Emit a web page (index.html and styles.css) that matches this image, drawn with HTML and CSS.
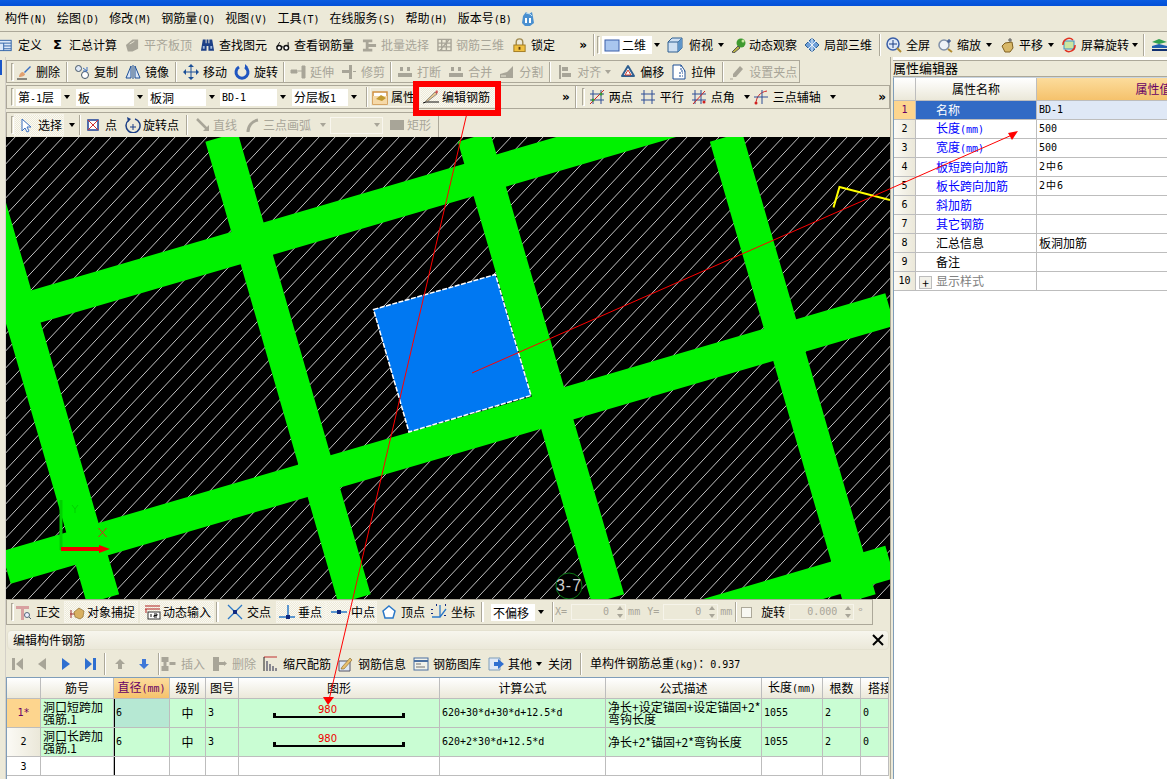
FILE: index.html
```html
<!DOCTYPE html>
<html lang="zh-CN">
<head>
<meta charset="utf-8">
<title>编辑构件钢筋</title>
<link rel="stylesheet" href="styles.css">
</head>
<body>
<div class="titlebar"></div>
<nav class="menubar">
  <span class="m">构件<span class="latin">(N)</span></span>
  <span class="m">绘图<span class="latin">(D)</span></span>
  <span class="m">修改<span class="latin">(M)</span></span>
  <span class="m">钢筋量<span class="latin">(Q)</span></span>
  <span class="m">视图<span class="latin">(V)</span></span>
  <span class="m">工具<span class="latin">(T)</span></span>
  <span class="m">在线服务<span class="latin">(S)</span></span>
  <span class="m">帮助<span class="latin">(H)</span></span>
  <span class="m">版本号<span class="latin">(B)</span></span>
  <svg class="ic ver" viewBox="0 0 16 16"><path d="M3 5l3-4 3 2 3-2 1 5 1 6-4 3H5L2 12z" fill="#4a90d0"/><path d="M5 7h2v5H5zM9 7h2v5H9z" fill="#fff"/><path d="M6 2l4 1 2 2" stroke="#bfe0f5" fill="none"/></svg>
</nav>
<div class="topbar">
  <div class="tgroup tg-main">
    <span class="t"><svg class="ic" viewBox="0 0 16 16"><rect x="0" y="3" width="13" height="11" fill="#dce8f8" stroke="#2f62a8"/><path d="M0 6h13M5 6v8M5 9h8M5 12h8" stroke="#2f62a8"/></svg>定义</span>
    <span class="t"><span class="ic sigma">Σ</span>汇总计算</span>
    <span class="t off"><svg class="ic" viewBox="0 0 16 16"><path d="M1 8l7-6h6v10l-6 3H3z" fill="#a8a598"/><path d="M5 7l5-3" stroke="#ece9d8"/></svg>平齐板顶</span>
    <span class="t"><svg class="ic" viewBox="0 0 16 16"><path d="M3 2h3v4h1V2h2v4h1V2h3l2 12h-6V9H7v5H1z" fill="#1c3f86"/><path d="M3 9h2v3H3zM11 9h2v3h-2z" fill="#9db7e0"/></svg>查找图元</span>
    <span class="t"><svg class="ic" viewBox="0 0 16 16"><circle cx="4.500" cy="11" r="2.500" fill="#fff" stroke="#111" stroke-width="1.500"/><circle cx="12" cy="11" r="2.500" fill="#fff" stroke="#111" stroke-width="1.500"/><path d="M2 10l3-5M14 10V5M7 10h2" stroke="#111" fill="none"/></svg>查看钢筋量</span>
    <span class="t off"><svg class="ic" viewBox="0 0 16 16"><path d="M1 2h10v3H7v2h8v3H7v2h4v3H1V12h3V5H1z" fill="#a8a598"/></svg>批量选择</span>
    <span class="t off"><svg class="ic" viewBox="0 0 16 16"><path d="M1 2h14v12H1zM1 6h14M1 10h14M5 2v12M10 2v12M3 14L13 2" stroke="#a8a598" stroke-width="1.500" fill="none"/></svg>钢筋三维</span>
    <span class="t"><svg class="ic" viewBox="0 0 16 16"><path d="M4.500 8V5a3.500 3.500 0 017 0v3" fill="none" stroke="#a08a50" stroke-width="1.500"/><rect x="2" y="8" width="12" height="7" fill="#f0c040" stroke="#a07a20"/><rect x="7" y="10" width="2" height="3" fill="#604010"/></svg>锁定</span>
  </div>
  <span class="more">»</span>
  <span class="sep"></span><span class="grip"></span>
  <div class="combo c-2d"><svg class="ic" viewBox="0 0 16 16"><rect x="1" y="3" width="14" height="11" fill="#a9c6ee" stroke="#3a5fa8"/></svg><span class="combo-text">二维</span><span class="combo-arrow"><i class="caret"></i></span></div>
  <div class="tgroup tg-view">
    <span class="t"><svg class="ic" viewBox="0 0 16 16"><path d="M1 5l4-4h10v10l-4 4H1z" fill="#cfe0f2" stroke="#2f5f90"/><path d="M1 5h10v10M11 5l4-4" fill="none" stroke="#2f5f90"/><path d="M11 5l4-4v10l-4 4z" fill="#5f95c8"/></svg>俯视<i class="caret"></i></span>
    <span class="t"><svg class="ic" viewBox="0 0 16 16"><circle cx="10" cy="6" r="4.500" fill="#3f9a30"/><path d="M1 15l6-6 2 2-6 5z" fill="#b8b040" stroke="#555"/><circle cx="12" cy="4" r="1.500" fill="#c8e8a0"/></svg>动态观察</span>
    <span class="t"><svg class="ic" viewBox="0 0 16 16"><path d="M8 1l7 7-7 7-7-7z" fill="#6fa0d8" stroke="#2f5f90"/><path d="M4 4l8 8M12 4l-8 8M8 1v14" stroke="#e8f0fa"/></svg>局部三维</span>
  </div>
  <span class="sep sp6"></span>
  <div class="tgroup tg-zoom">
    <span class="t"><svg class="ic" viewBox="0 0 16 16"><circle cx="7" cy="7" r="6" fill="#dfe8f6" stroke="#3a5fa8" stroke-width="1.500"/><path d="M7 3v8M3 7h8" stroke="#1c3f86"/><path d="M11 11l4 4" stroke="#b08a30" stroke-width="2"/></svg>全屏</span>
    <span class="t"><svg class="ic" viewBox="0 0 16 16"><circle cx="7" cy="8" r="5" fill="#eef2f8" stroke="#8090a8" stroke-width="1.500"/><path d="M11 12l4 3" stroke="#b08a30" stroke-width="2"/><path d="M12 2v4M10 4h4" stroke="#1c3f86"/></svg>缩放<i class="caret"></i></span>
    <span class="t"><svg class="ic" viewBox="0 0 16 16"><path d="M3 9l3-3 7-1 1 6-3 4H6z" fill="#d8b868" stroke="#806020"/><path d="M11 1v4M9 3h4" stroke="#555"/></svg>平移<i class="caret"></i></span>
    <span class="t"><svg class="ic" viewBox="0 0 16 16"><rect x="3" y="4" width="10" height="8" fill="#cde6a0" stroke="#3a8fc8"/><path d="M2 8a6 6 0 0110-5M14 8a6 6 0 01-10 5" fill="none" stroke="#e03020" stroke-width="1.500"/></svg>屏幕旋转<i class="caret c-last"></i></span>
  </div>
  <span class="sep sp8"></span>
  <svg class="ic" viewBox="0 0 16 16"><path d="M1 5l7-3 8 3-8 2z" fill="#30a050"/><path d="M1 9l7-2 8 2v2H1z" fill="#2060b0"/><path d="M1 12h15v2H1z" fill="#103070"/></svg>
</div>

<div class="workspace">
  <div class="edge"><span class="edge-mark"></span></div>
  <div class="center">
    <div class="band band-edit">
      <span class="grip"></span>
      <span class="t"><svg class="ic" viewBox="0 0 16 16"><path d="M1 15h10" stroke="#222"/><path d="M3 13c0-3 2-5 4-5l2 2c0 2-3 3-6 3z" fill="#e0a070"/><path d="M8 8l6-6 1 1-6 6z" fill="#3a6fc0"/></svg>删除</span>
      <span class="vs"></span>
      <span class="t"><svg class="ic" viewBox="0 0 16 16"><circle cx="4.500" cy="4.500" r="3" fill="#dfe8f6" stroke="#456"/><circle cx="11" cy="11" r="3.500" fill="#fff" stroke="#456"/><path d="M9 4l4 3M13 3v4H9" stroke="#3a6fc0" fill="none"/></svg>复制</span>
      <span class="t"><svg class="ic" viewBox="0 0 16 16"><path d="M6 2L1 14h5zM10 2l5 12h-5z" fill="#dce8f8" stroke="#1c4f96"/><path d="M8 1v14" stroke="#1c4f96"/></svg>镜像</span>
      <span class="vs"></span>
      <span class="t"><svg class="ic" viewBox="0 0 16 16"><path d="M8 1v14M1 8h14" stroke="#1c4f96"/><path d="M8 0l3 3H5zM8 16l3-3H5zM0 8l3-3v6zM16 8l-3-3v6z" fill="#1c4f96"/></svg>移动</span>
      <span class="t"><svg class="ic" viewBox="0 0 16 16"><path d="M5 3a6 6 0 106 0" fill="none" stroke="#1f55c0" stroke-width="3"/><path d="M11 0v6l3-3z" fill="#1f55c0"/></svg>旋转</span>
      <span class="vs tight"></span>
      <span class="t off"><svg class="ic" viewBox="0 0 16 16"><path d="M1 6h6v3H1zM8 7h4M12 2h3v12h-3z" fill="#a8a598" stroke="#a8a598"/></svg>延伸</span>
      <span class="t off"><svg class="ic" viewBox="0 0 16 16"><path d="M1 6h7V1h3v14H8V9H1zM12 7h3v1h-3z" fill="#a8a598"/></svg>修剪</span>
      <span class="vs tight"></span>
      <span class="t off"><svg class="ic" viewBox="0 0 16 16"><path d="M1 9h14v4H1zM3 3h3v4H3zM10 3h3v4h-3z" fill="#a8a598"/></svg>打断</span>
      <span class="t off"><svg class="ic" viewBox="0 0 16 16"><path d="M1 9h14v4H1zM3 3h3v4H3zM10 3h3v4h-3z" fill="#a8a598"/></svg>合并</span>
      <span class="t off"><svg class="ic" viewBox="0 0 16 16"><path d="M1 10l7-2 6-6v12H1z" fill="#a8a598"/><path d="M2 12h5" stroke="#ece9d8"/></svg>分割</span>
      <span class="vs"></span>
      <span class="t off"><svg class="ic" viewBox="0 0 16 16"><path d="M2 1h2v14H2zM5 3h6v4H5zM5 9h9v4H5z" fill="#a8a598"/></svg>对齐<i class="caret gray"></i></span>
      <span class="t"><svg class="ic" viewBox="0 0 16 16"><path d="M8 2l6 10H2z" fill="#fff" stroke="#2f5f90" stroke-width="2" stroke-linejoin="round"/><path d="M8 6l3 5H5z" fill="#fff" stroke="#d04030"/></svg>偏移</span>
      <span class="t"><svg class="ic" viewBox="0 0 16 16"><path d="M2 1h8l4 6v8H2z" fill="#fff" stroke="#1c4f96"/><path d="M10 1v6h4M8 9h4M8 12h4" stroke="#1c4f96" stroke-dasharray="2 1" fill="none"/></svg>拉伸</span>
      <span class="vs wide"></span>
      <span class="t off"><svg class="ic" viewBox="0 0 16 16"><path d="M4 10l7-8 3 3-7 8H4z" fill="#a8a598"/><path d="M1 15h3" stroke="#a8a598"/></svg>设置夹点</span>
    </div>

    <div class="band band-pick">
      <span class="grip"></span>
      <div class="pick p1"><span>第<span class="latin">-1</span>层</span><span class="combo-arrow"><i class="caret"></i></span></div>
      <div class="pick p2"><span>板</span><span class="combo-arrow"><i class="caret"></i></span></div>
      <div class="pick p2"><span>板洞</span><span class="combo-arrow"><i class="caret"></i></span></div>
      <div class="pick p3"><span class="latin">BD-1</span><span class="combo-arrow"><i class="caret"></i></span></div>
      <div class="pick p4"><span>分层板<span class="latin">1</span></span><span class="combo-arrow"><i class="caret"></i></span></div>
      <span class="vs vs-pick"></span>
      <span class="btn btn-attr"><svg class="ic" viewBox="0 0 16 16"><path d="M1 3h14v12H1z" fill="#fff" stroke="#d09040" stroke-width="1.500"/><path d="M1 7h14v8H1z" fill="#f6d9a8"/><path d="M4 10l5-4 5 3-4 3z" fill="#c09a30"/></svg>属性</span>
      <span class="btn btn-rebar"><svg class="ic" viewBox="0 0 16 16"><path d="M0 14l3-1h13" stroke="#111" fill="none"/><path d="M3 12l9-9 2 2-9 7-3 1z" fill="#e8c890" stroke="#555" stroke-width=".6"/><path d="M12 3l2-2 1 2-1 2z" fill="#d05050"/></svg>编辑钢筋</span>
      <span class="more m-pick">»</span>
      <span class="sep sp3"></span>
      <span class="grip hidden-grip"></span>
      <div class="tgroup tg-axis">
        <span class="t"><svg class="ic" viewBox="0 0 16 16"><path d="M4 1v14M12 1v14M1 5h14M1 11h14" stroke="#2f4f96"/><path d="M1 15L15 1" stroke="#d02020"/><circle cx="4" cy="11" r="1.500" fill="#3a9a30"/><circle cx="12" cy="5" r="1.500" fill="#3a9a30"/></svg>两点</span>
        <span class="t"><svg class="ic" viewBox="0 0 16 16"><path d="M4 1v14M12 1v14M1 5h14M1 11h14" stroke="#2f4f96"/></svg>平行</span>
        <span class="t"><svg class="ic" viewBox="0 0 16 16"><path d="M4 1v14M10 1v14M1 5h14M1 11h14" stroke="#2f4f96"/><path d="M2 15L14 2" stroke="#d02020"/><circle cx="13" cy="13" r="1.500" fill="#d02020"/></svg>点角<i class="caret"></i></span>
        <span class="t"><svg class="ic" viewBox="0 0 16 16"><path d="M3 15C3 8 7 3 14 2" fill="none" stroke="#d02020"/><path d="M9 1v14M1 8h14" stroke="#2f4f96"/><circle cx="3" cy="14" r="1.500" fill="#d02020"/></svg>三点辅轴<i class="caret"></i></span>
      </div>
      <span class="more m-axis">»</span>
    </div>

    <div class="band band-draw">
      <span class="grip"></span>
      <span class="btn btn-sel"><svg class="ic" viewBox="0 0 16 16"><path d="M4 2v12l3-3 2 4 2-1-2-4h4z" fill="#fff" stroke="#3a6fc0"/></svg>选择</span><i class="caret c-sel"></i>
      <span class="vs"></span>
      <span class="t t-dot"><svg class="ic" viewBox="0 0 16 16"><rect x="3" y="3" width="10" height="10" fill="#fff" stroke="#1c3f96" stroke-width="1.500"/><path d="M3 3l10 10M13 3L3 13" stroke="#d03030"/></svg>点</span>
      <span class="t t-rot"><svg class="ic" viewBox="0 0 16 16"><path d="M4 3a7 7 0 106 -1" fill="none" stroke="#1c3f86" stroke-width="1.500"/><path d="M8 7v6M5 10h6" stroke="#1c3f86"/><path d="M2 0l4 2-3 3z" fill="#1c3f86"/></svg>旋转点</span>
      <span class="vs"></span>
      <span class="t off"><svg class="ic" viewBox="0 0 16 16"><path d="M2 2l10 10" stroke="#a8a598" stroke-width="2.500"/><path d="M14 14H8l6-6z" fill="#a8a598"/></svg>直线</span>
      <span class="t off"><svg class="ic" viewBox="0 0 16 16"><path d="M3 15C3 9 7 4 13 3" fill="none" stroke="#a8a598" stroke-width="3"/></svg>三点画弧<i class="caret gray"></i></span>
      <div class="pick dis"><span class="combo-arrow"><i class="caret gray"></i></span></div>
      <span class="t off"><svg class="ic" viewBox="0 0 16 16"><rect x="1" y="3" width="14" height="10" fill="#a8a598"/></svg>矩形</span>
    </div>

    <svg class="canvas" viewBox="6 137 884 462" width="884" height="462">
      <defs>
        <pattern id="hatch" patternUnits="userSpaceOnUse" width="16" height="17"><path d="M0 17L16 0" stroke="#c4c4c4" stroke-width="1" fill="none"/></pattern>
      </defs>
      <rect x="6" y="137" width="884" height="462" fill="#000"/>
      <rect x="6" y="137" width="884" height="462" fill="url(#hatch)" shape-rendering="crispEdges"/>
      <g class="beams">
        <path d="M-30.500 137L103 599M221.500 137L354.500 599M474 137L608 599M726 137L859.500 599"/>
        <path d="M6 315.200L890 57M6 567.500L890 309.500M650 632L890 562"/>
      </g>
      <polygon points="373.500,309.500 495.500,274.500 531,395.500 409,432" fill="#0078f2"/>
      <polygon points="373.500,309.500 495.500,274.500 531,395.500 409,432" fill="none" stroke="#fff" stroke-width="1.500" stroke-dasharray="5 1.500"/>
      <path d="M833.500 207.500L839.500 187L890 200" fill="none" stroke="#ffff00" stroke-width="2"/>
      <rect x="59.500" y="500" width="3" height="50" fill="#00d000"/>
      <path d="M72 505l3 4 3-4M75 509v4" stroke="#00d000" fill="none"/>
      <path d="M98.500 528l8 9M106.500 528l-8 9" stroke="#e02020"/>
      <path d="M61 547h38v-2l11 4-11 4v-2H61z" fill="#f00000"/>
      <circle cx="569" cy="586" r="13" fill="#000" stroke="#0a7a14"/>
      <text class="axis-label" x="569" y="591" text-anchor="middle">3-7</text>
    </svg>

    <div class="band band-snap">
      <span class="grip"></span>
      <span class="t s-first"><svg class="ic" viewBox="0 0 16 16"><path d="M0 2h13v3H8v11H5V5H0z" fill="#d8a0a0"/><circle cx="11" cy="11" r="2.500" fill="#eef" stroke="#567"/><path d="M13 13l2 2" stroke="#567"/></svg>正交</span>
      <span class="btn btn-snap"><svg class="ic" viewBox="0 0 16 16"><path d="M2 6v8M1 10h6" stroke="#a03030"/><path d="M5 8l5-4 5 3-1 6-3 2-5-2z" fill="#d8b060" stroke="#806020" stroke-width=".6"/></svg>对象捕捉</span>
      <span class="btn btn-snap"><svg class="ic" viewBox="0 0 16 16"><path d="M0 2h15M0 5h15" stroke="#b02020"/><path d="M1 5v4" stroke="#b02020"/><rect x="3" y="8" width="12" height="7" fill="#fff" stroke="#333"/><path d="M6 10v3M9 10h3v1.500H9V13h3" stroke="#111" fill="none"/></svg>动态输入</span>
      <span class="vs dbl d1"></span>
      <span class="t t-cross"><svg class="ic" viewBox="0 0 16 16"><path d="M1 1l14 14M15 1L1 15" stroke="#2a78c8" stroke-width="1.300"/><rect x="6" y="6" width="4" height="4" fill="#102a80"/></svg>交点</span>
      <span class="btn btn-pt"><svg class="ic" viewBox="0 0 16 16"><path d="M0 13h16M9 1v14" stroke="#2a78c8" stroke-width="1.500"/><rect x="7" y="11" width="4" height="4" fill="#102a80"/></svg>垂点</span>
      <span class="btn btn-pt pt2"><svg class="ic" viewBox="0 0 16 16"><path d="M0 8h16" stroke="#2a78c8" stroke-width="1.500"/><rect x="6" y="6" width="4" height="4" fill="#102a80"/></svg>中点</span>
      <span class="t"><svg class="ic" viewBox="0 0 16 16"><path d="M8 2l6 5-2 7H4L2 7z" fill="#fff" stroke="#2a78c8" stroke-width="1.500"/></svg>顶点</span>
      <span class="t t-coord"><svg class="ic" viewBox="0 0 16 16"><path d="M9 1v12H1M9 13l6-8" stroke="#2a78c8" stroke-width="1.300" fill="none"/><path d="M1 5v1M1 9v1M5 1h1M14 1h1M14 11v1" stroke="#102a80" stroke-width="2"/></svg>坐标</span>
      <span class="vs dbl d2"></span>
      <div class="pick p-off"><span>不偏移</span><span class="combo-arrow"><i class="caret"></i></span></div>
      <span class="vs vs-xy"></span>
      <span class="dim latin">X=</span>
      <div class="spin s-xy"><span class="latin">0</span><span class="spin-btn"></span></div>
      <span class="dim latin unit">mm</span>
      <span class="dim latin y-lab">Y=</span>
      <div class="spin s-xy"><span class="latin">0</span><span class="spin-btn"></span></div>
      <span class="dim latin unit">mm</span>
      <span class="vs"></span>
      <span class="check"></span>
      <span class="rot-lab">旋转</span>
      <div class="spin s-rot"><span class="latin">0.000</span><span class="spin-btn"></span></div>
      <span class="dim deg">°</span>
    </div>

    <div class="panel-head"><span>编辑构件钢筋</span><svg class="close" viewBox="0 0 12 12"><path d="M1 1l10 10M11 1L1 11" stroke="#000" stroke-width="2"/></svg></div>

    <div class="nav">
      <svg class="nv n1" viewBox="0 0 12 12"><path d="M0 0h3v12H0zM11 0v12L4 6z" fill="#a8a598"/></svg>
      <svg class="nv n2" viewBox="0 0 12 12"><path d="M10 0v12L2 6z" fill="#a8a598"/></svg>
      <svg class="nv n3" viewBox="0 0 12 12"><path d="M2 0v12l8-6z" fill="#2f6fd0"/></svg>
      <svg class="nv n4" viewBox="0 0 12 12"><path d="M1 0v12l7-6zM9 0h3v12H9z" fill="#2f6fd0"/></svg>
      <span class="vs"></span>
      <svg class="nv n5" viewBox="0 0 12 12"><path d="M6 1l5 5H8v5H4V6H1z" fill="#a8a598"/></svg>
      <svg class="nv n6" viewBox="0 0 12 12"><path d="M6 11l5-5H8V1H4v5H1z" fill="#3f78d8"/></svg>
      <span class="vs"></span>
      <span class="t off t-ins"><svg class="ic" viewBox="0 0 16 16"><path d="M0 1h7v5H0zM0 10h7v5H0zM2 6h3v4H2zM8 6h6v3H8z" fill="#a8a598"/></svg>插入</span>
      <span class="t off"><svg class="ic" viewBox="0 0 16 16"><path d="M1 1h6v14H1zM7 6h5v3H7zM12 5l3 2.500-3 2.500z" fill="#a8a598"/></svg>删除</span>
      <span class="t"><svg class="ic" viewBox="0 0 16 16"><path d="M1 1h13" stroke="#c03030"/><path d="M1 1v14" stroke="#222"/><path d="M4 5v10M7 8v7M10 10v5M13 12v3" stroke="#667" stroke-width="1.500"/></svg>缩尺配筋</span>
      <span class="t"><svg class="ic" viewBox="0 0 16 16"><path d="M1 5h11v10H1z" fill="#dfe8f6" stroke="#556"/><path d="M4 11l8-9 2 2-8 9H3z" fill="#e8c070" stroke="#806020" stroke-width=".6"/></svg>钢筋信息</span>
      <span class="t"><svg class="ic" viewBox="0 0 16 16"><rect x="1" y="2" width="14" height="12" fill="#f2f2ea" stroke="#4a6fa0"/><path d="M1 5h14" stroke="#4a6fa0" stroke-width="2"/><path d="M3 8h5M3 11h9" stroke="#707070"/></svg>钢筋图库</span>
      <span class="t"><svg class="ic" viewBox="0 0 16 16"><path d="M1 2h11v12H1z" fill="#dfe8f6" stroke="#7f9db9"/><path d="M6 6h4V3l6 5-6 5v-3H6z" fill="#2f6fd0"/></svg>其他<i class="caret"></i></span>
      <span class="t t-close">关闭</span>
      <span class="vs"></span>
      <span class="weight">单构件钢筋总重<span class="latin">(kg)</span>：<span class="latin">0.937</span></span>
    </div>

    <div class="grid-wrap">
      <table class="grid">
        <colgroup><col class="g0"><col class="g1"><col class="g2"><col class="g3"><col class="g4"><col class="g5"><col class="g6"><col class="g7"><col class="g8"><col class="g9"><col class="g10"></colgroup>
        <thead>
          <tr><th></th><th>筋号</th><th class="active">直径<span class="latin">(mm)</span></th><th>级别</th><th>图号</th><th>图形</th><th>计算公式</th><th>公式描述</th><th>长度<span class="latin">(mm)</span></th><th>根数</th><th class="clip">搭接</th></tr>
        </thead>
        <tbody>
          <tr class="green r2l">
            <td class="hd cur latin">1*</td><td class="name">洞口短跨加<br>强筋.1</td><td class="latin dia cell-on">6</td><td class="ctr">中</td><td class="latin">3</td>
            <td class="shape"><div class="len">980</div><div class="bar"></div></td>
            <td class="latin">620+30*d+30*d+12.5*d</td><td class="name">净长+设定锚固+设定锚固+2*<br>弯钩长度</td><td class="latin">1055</td><td class="latin">2</td><td class="latin">0</td>
          </tr>
          <tr class="green r2l">
            <td class="hd latin">2</td><td class="name">洞口长跨加<br>强筋.1</td><td class="latin dia">6</td><td class="ctr">中</td><td class="latin">3</td>
            <td class="shape"><div class="len">980</div><div class="bar"></div></td>
            <td class="latin">620+2*30*d+12.5*d</td><td class="name">净长+2*锚固+2*弯钩长度</td><td class="latin">1055</td><td class="latin">2</td><td class="latin">0</td>
          </tr>
          <tr class="blank">
            <td class="hd latin">3</td><td></td><td class="dia"></td><td></td><td></td><td></td><td></td><td></td><td></td><td></td><td></td>
          </tr>
        </tbody>
      </table>
    </div>
  </div>
  <div class="vstrip"></div>
  <aside class="props">
    <div class="props-title">属性编辑器</div>
    <div class="props-wrap">
      <table class="ptable">
        <colgroup><col class="p0"><col class="pn"><col class="pv"></colgroup>
        <thead><tr><th></th><th>属性名称</th><th class="pval">属性值</th></tr></thead>
        <tbody>
          <tr><td class="hd cur latin">1</td><td class="pname sel">名称</td><td class="latin selv">BD-1</td></tr>
          <tr><td class="hd latin">2</td><td class="pname blue">长度<span class="latin">(mm)</span></td><td class="latin">500</td></tr>
          <tr><td class="hd latin">3</td><td class="pname blue">宽度<span class="latin">(mm)</span></td><td class="latin">500</td></tr>
          <tr><td class="hd latin">4</td><td class="pname blue">板短跨向加筋</td><td class="latin rb">2中6</td></tr>
          <tr><td class="hd latin">5</td><td class="pname blue">板长跨向加筋</td><td class="latin rb">2中6</td></tr>
          <tr><td class="hd latin">6</td><td class="pname blue">斜加筋</td><td></td></tr>
          <tr><td class="hd latin">7</td><td class="pname blue">其它钢筋</td><td></td></tr>
          <tr><td class="hd latin">8</td><td class="pname">汇总信息</td><td>板洞加筋</td></tr>
          <tr><td class="hd latin">9</td><td class="pname">备注</td><td></td></tr>
          <tr><td class="hd latin">10</td><td class="pname grayname"><span class="plus">+</span>显示样式</td><td></td></tr>
        </tbody>
      </table>
    </div>
  </aside>
</div>

<svg class="overlay" viewBox="0 0 1167 779" width="1167" height="779">
  <rect x="416" y="84" width="82" height="29" fill="none" stroke="#ff0000" stroke-width="6"/>
  <path d="M467 113L329 700M472 373L1012 135" stroke="#ff0000" fill="none"/>
  <path d="M1018 131l-10 2 4 7zM328 705l-5-8h11z" fill="#ff0000"/>
</svg>
</body>
</html>
```
FILE: styles.css
```css
* { box-sizing: border-box; }
html, body { margin: 0; padding: 0; }
body {
  position: relative;
  width: 1167px;
  height: 779px;
  overflow: hidden;
  background: #ece9d8;
  color: #000;
  font: 12px/16px "Noto Sans CJK SC", "Noto Sans", sans-serif;
}
.latin { font-family: "DejaVu Sans Mono", "Noto Sans CJK SC", monospace; font-size: 10px; }
.titlebar { height: 6px; background: linear-gradient(#0a5ce0, #0350d8); }
.menubar { height: 26px; display: flex; align-items: center; padding-left: 5px; gap: 10px; border-bottom: 1px solid #aca899; }
.m { white-space: nowrap; }
.ic { width: 16px; height: 16px; flex: none; display: block; }
.ver { margin-left: -2px; }
.t { display: flex; align-items: center; gap: 4px; white-space: nowrap; }
.off { color: #a8a598; }
.sigma { font: bold 13px/16px "DejaVu Sans", sans-serif; text-align: center; }
.caret { display: block; flex: none; width: 0; height: 0; border: 3px solid transparent; border-top: 4px solid #000; border-bottom: 0; }
.caret.gray { border-top-color: #a8a598; }
.more { font: bold 12px/14px "DejaVu Sans", sans-serif; flex: none; }

.topbar { height: 25px; display: flex; align-items: center; }
.tgroup { display: flex; align-items: center; gap: 7px; }
.tg-main { width: 559px; margin-left: -1px; gap: 8px; }
.tg-main .ic { width: 15px; }
.topbar > .more { margin-left: 23px; }
.sep { width: 2px; height: 22px; background: #aca899; border-right: 1px solid #fff; flex: none; margin: 0 2px 0 6px; }
.sp6 { margin: 0 5px 0 7px; }
.sp8 { margin: 0 6px 0 5px; }
.sp3 { margin: 0 2px 0 2px; }
.grip { display: block; flex: none; width: 3px; height: 18px; border: 1px solid #aca899; border-right-color: #fff; border-bottom-color: #fff; margin-right: 2px; }
.band .hidden-grip { margin-right: 5px; }
.combo { display: flex; align-items: center; background: #fff; flex: none; }
.c-2d { width: 61px; height: 18px; margin-right: 4px; padding-left: 2px; }
.combo-text { margin-left: 2px; flex: 1; }
.combo-arrow { width: 11px; height: 100%; background: #ece9d8; display: flex; align-items: center; justify-content: center; flex: none; }
.tg-view .t:first-child { gap: 6px; }
.tg-view .t:nth-child(2) { gap: 2px; }
.tg-view .caret { margin-left: -1px; }
.tg-zoom .caret { margin-left: 1px; }
.tg-zoom .caret.c-last { margin-left: -1px; }

.workspace { display: flex; height: 722px; }
.edge { width: 6px; flex: none; padding-top: 3px; border-right: 1px solid #d4d0c8; }
.edge-mark { display: block; width: 2px; height: 15px; background: #1a56c8; }
.center { width: 884px; flex: none; padding-top: 3px; display: flex; flex-direction: column; }
.vstrip { width: 3px; flex: none; background: #ece9d8; border-left: 1px solid #aca899; }

.band { display: flex; align-items: center; flex: none; border: 1px solid #aca899; padding-left: 4px; gap: 7px; }
.band .grip { margin-right: -5px; }
.band .grip.hidden-grip { margin-right: 1px; }
.band-edit { width: 794px; height: 23px; margin-bottom: 2px; }
.band-pick { width: 884px; height: 24px; margin-bottom: 3px; gap: 3px; }
.band-draw { width: 433px; height: 25px; border-bottom: 0; gap: 8px; }
.band-snap { width: 867px; height: 26px; margin-bottom: 5px; gap: 4px; }
.vs { display: block; flex: none; width: 2px; height: 20px; background: #aca899; border-right: 1px solid #fff; margin: 0 -1px; }
.vs.tight { margin: 0 -2px; }
.vs.wide { margin: 0 -2px 0 0; }
.vs.dbl { width: 3px; border-left: 1px solid #aca899; background: #fff; }
.vs.d1 { margin: 0 4px 0 -2px; }
.vs.d2 { margin: 0 3px 0 0; }
.vs.vs-pick { margin: 0 -1px 0 4px; }
.vs.vs-xy { margin: 0 -3px 0 2px; }

.band-edit .off .caret { margin-left: 0; margin-right: 2px; }

.pick { display: flex; align-items: center; justify-content: space-between; background: #fff; padding-left: 2px; height: 17px; flex: none; line-height: 17px; }
.p1 { width: 56px; margin-left: 4px; margin-right: 1px; }
.p2 { width: 69px; }
.p3 { width: 68px; }
.p4 { width: 67px; margin-left: 1px; }
.dis { width: 53px; margin-left: -4px; margin-right: -2px; background: #ece9d8; border: 1px solid #f8f6ee; justify-content: flex-end; }
.p-off { width: 55px; }
.btn { display: flex; align-items: center; gap: 3px; white-space: nowrap; flex: none; height: 20px; border: 1px solid #f6f4ea; background: repeating-conic-gradient(#fbfaf3 0 25%, #ece9d8 0 50%) 0 0 / 2px 2px; }
.btn-attr { width: 47px; padding-left: 1px; background: #ece9d8; }
.btn-rebar { width: 75px; padding-left: 2px; gap: 3px; }
.m-pick { margin-left: 64px; }
.tg-axis { gap: 7px; }
.tg-axis .caret { margin-left: 5px; margin-right: -4px; }
.m-axis { margin-left: auto; margin-right: 3px; }
.btn-sel { width: 50px; height: 22px; padding-left: 3px; gap: 4px; margin-left: -3px; }
.c-sel { margin-left: -3px; margin-right: -3px; }
.t-dot { margin-left: -3px; }
.t-rot { gap: 2px; }
.band-draw .off { gap: 2px; }
.band-draw .off .caret { margin-left: 7px; }

.canvas { display: block; flex: none; }
.beams path { stroke: #00f200; stroke-width: 33.600; fill: none; }
.axis-label { font: 16px "Liberation Sans", sans-serif; fill: #cfcfcf; letter-spacing: 1px; }

.s-first { margin-left: 3px; }
.btn-snap { width: 74px; height: 22px; padding-left: 4px; gap: 2px; }
.btn-snap + .btn-snap { margin-left: -2px; }
.t-cross { margin-right: 1px; }
.btn-pt { width: 50px; height: 22px; padding-left: 2px; gap: 3px; }
.pt2 { width: 51px; margin-left: -4px; padding-left: 4px; gap: 4px; }
.t-coord { margin-left: 2px; }
.t-coord + .vs { margin-left: 2px; }
.dim { color: #a8a598; }
.unit { margin-left: -2px; }
.y-lab { margin-left: 3px; }
.spin { display: flex; align-items: center; justify-content: flex-end; flex: none; height: 16px; border: 1px solid #f6f4ea; color: #a8a598; gap: 6px; }
.s-xy { width: 55px; }
.s-rot { width: 65px; }
.spin-btn { width: 10px; height: 12px; display: flex; flex-direction: column; align-items: center; justify-content: space-between; }
.spin-btn::before, .spin-btn::after { content: ""; display: block; width: 0; height: 0; border: 3px solid transparent; }
.spin-btn::before { border-bottom: 4px solid #a8a598; border-top: 0; }
.spin-btn::after { border-top: 4px solid #a8a598; border-bottom: 0; }
.check { width: 11px; height: 11px; background: #f8f8f2; border: 1px solid #aca899; flex: none; margin-left: 1px; }
.rot-lab { margin-left: 5px; }

.panel-head { height: 20px; width: 882px; margin-left: 1px; display: flex; align-items: center; justify-content: space-between; padding: 0 4px 0 5px; flex: none; border: 1px solid #e4e1d0; border-radius: 4px; background: linear-gradient(#f7f6ee, #ebe8d9); }
.close { width: 12px; height: 12px; display: block; }

.nav { height: 24px; margin: 2px 0 1px; display: flex; align-items: center; flex: none; gap: 7px; padding-left: 6px; }
.nv { width: 12px; height: 12px; flex: none; display: block; }
.n2, .n3, .n4, .n6 { margin-left: 5px; }
.nav .vs { margin: 0 1px; height: 22px; }
.t-ins { margin-left: -7px; gap: 3px; }
.t-ins .ic { width: 17px; }
.t-close { margin-left: -1px; }
.weight { white-space: nowrap; }

.grid-wrap { flex: 1; width: 883px; border-top: 1px solid #7f9db9; border-left: 1px solid #7f9db9; background: #fff; overflow: hidden; }
.grid { table-layout: fixed; border-spacing: 0; width: 882px; }
.g0 { width: 34px; } .g1 { width: 73px; } .g2 { width: 56px; } .g3 { width: 36px; } .g4 { width: 33px; }
.g5 { width: 201px; } .g6 { width: 166px; } .g7 { width: 156px; } .g8 { width: 61px; } .g9 { width: 38px; } .g10 { width: 28px; }
th, td { padding: 0 2px; border-right: 1px solid #bdbdbd; border-bottom: 1px solid #bdbdbd; font-weight: normal; white-space: nowrap; overflow: hidden; }
th { background: linear-gradient(#fff, #ebe8d9); text-align: center; line-height: 18px; height: 20px; }
th.active { background: linear-gradient(#fcdc9c, #f5c26c); color: #660066; }
th.clip { text-align: left; padding-left: 7px; }
.grid tbody tr.green td { background: #c9fdd3; height: 29px; line-height: 12px; }
.grid tbody tr.blank td { height: 19px; background: #fff; line-height: 15px; }
.grid tbody td.hd, .ptable td.hd { background: linear-gradient(90deg, #fbfaf5, #ebe8d9); text-align: center; }
.grid tbody tr.green td.hd { background: linear-gradient(90deg, #fbfaf5, #ebe8d9); }
.grid tbody tr.green td.cur, .ptable td.cur { background: #fdd58e; color: #660066; }
.grid .name { line-height: 12px; }
.grid td.dia { box-shadow: inset 1px 0 0 #000; }
.grid tbody tr.green td.cell-on { background: #b6e8d3; }
.ctr { text-align: center; }
.grid td.shape { text-align: center; padding: 0; vertical-align: top; }
.len { color: #f00000; font: 10px/12px "DejaVu Sans", sans-serif; padding: 5px 23px 0 0; }
.bar { width: 132px; height: 5px; margin: -3px auto 0; border: solid #000; border-width: 0 3px 2px; }

.props { width: 274px; flex: none; padding-top: 3px; overflow: hidden; background: #fff; }
.props-title { height: 17px; line-height: 13px; background: #ece9d8; border-top: 1px solid #aca899; border-bottom: 1px solid #aca899; font-size: 13px; white-space: nowrap; }
.props-wrap { border-left: 1px solid #7f9db9; border-top: 1px solid #c8d4e0; height: 703px; overflow: hidden; }
.ptable { table-layout: fixed; border-spacing: 0; width: 377px; }
.p0 { width: 22px; } .pn { width: 121px; } .pv { width: 234px; }
.ptable th { height: 23px; }
.ptable th.pval { background: linear-gradient(#fcdc9c, #f5c26c); color: #660066; }
.ptable td { height: 19px; line-height: 16px; }
.ptable .pname { padding-left: 20px; }
.ptable .blue { color: #0000ff; }
.ptable .sel { background: #316ac5; color: #fff; }
.ptable .selv { background: #dfe8f6; }
.ptable .rb { letter-spacing: 1px; }
.ptable .grayname { color: #808080; padding-left: 3px; }
.plus { display: inline-block; width: 13px; height: 13px; line-height: 11px; text-align: center; border: 1px solid #bdbdbd; background: #f2f1ea; color: #000; margin-right: 4px; vertical-align: -2px; }

.overlay { position: absolute; left: 0; top: 0; pointer-events: none; }
```
